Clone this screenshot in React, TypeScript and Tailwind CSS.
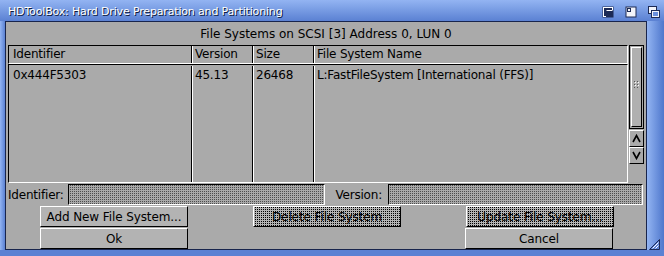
import React from 'react'

const font = { fontFamily: '"DejaVu Sans", Verdana, sans-serif' }

function Btn({ label, disabled, hidden }: { label?: string; disabled?: boolean; hidden?: boolean }) {
  if (hidden) return <div className="h-[21px] w-[147px]" />
  return (
    <div className="relative flex h-[21px] w-[148px] items-center justify-center border border-t-white border-l-white border-r-black border-b-black bg-[#b3b3b3] text-[12px] tracking-[-0.1px] text-black">
      {label}
      {disabled && (
        <div className="absolute inset-0 bg-[conic-gradient(#000_25%,transparent_0)] bg-[length:2px_2px]" />
      )}
    </div>
  )
}

function Field({ w }: { w: string }) {
  return (
    <div className={`h-[21px] ${w} border border-t-black border-l-black border-r-white border-b-white`}>
      <div className="h-full w-full bg-[conic-gradient(#4c4c4c_25%,#a9a9a9_0)] bg-[length:2px_2px]" />
    </div>
  )
}

function Row({ cells }: { cells: string[] }) {
  return (
    <div className="flex h-full text-[12px] tracking-[-0.2px] text-black">
      <div className="w-[183px] shrink-0 border-r border-black pl-[4px]">{cells[0]}</div>
      <div className="w-[61px] shrink-0 border-l border-r border-l-white border-r-black pl-[2px]">{cells[1]}</div>
      <div className="w-[61px] shrink-0 border-l border-r border-l-white border-r-black pl-[2px]">{cells[2]}</div>
      <div className="flex-1 border-l border-white pl-[2px]">{cells[3]}</div>
    </div>
  )
}

export default function App() {
  return (
    <div style={font} className="relative flex h-[256px] w-[664px] flex-col overflow-hidden bg-[#6a8fdc]">
      {/* title bar */}
      <div className="flex h-[21px] items-center bg-gradient-to-b from-[#93b4f2] to-[#5b81d3] pl-[8px] pt-[3px]">
        <span className="text-[11px] tracking-[-0.16px] text-white [text-shadow:1px_1px_0_#0d1a3c]">HDToolBox: Hard Drive Preparation and Partitioning</span>
        <div className="ml-auto mr-[4px] flex items-center gap-[11px]">
          <svg width="12" height="12" viewBox="0 0 12 12">
            <rect x="0.5" y="0.5" width="11" height="11" fill="#1c2a55" />
            <rect x="1.5" y="1.5" width="9" height="9" fill="none" stroke="#fff" />
            <rect x="5" y="5" width="5" height="5" fill="#1c2a55" />
            <rect x="4.5" y="4.5" width="6" height="6" fill="none" stroke="#1c2a55" />
            <path d="M4.5 4.5 H10.5" stroke="#fff" />
          </svg>
          <svg width="12" height="12" viewBox="0 0 12 12">
            <rect x="0.5" y="0.5" width="11" height="11" fill="#1c2a55" />
            <rect x="1.5" y="1.5" width="9" height="9" fill="#f2f4fa" />
            <rect x="2" y="2" width="4" height="4" fill="#1c2a55" />
            <rect x="3" y="3" width="2" height="2" fill="#f2f4fa" />
          </svg>
          <svg width="12" height="12" viewBox="0 0 12 12">
            <rect x="0.5" y="0.5" width="8" height="7" fill="#f2f4fa" stroke="#1c2a55" />
            <rect x="3.5" y="4.5" width="8" height="7" fill="#f2f4fa" stroke="#1c2a55" />
            <rect x="5" y="6" width="5" height="4" fill="#6a8fdc" />
          </svg>
        </div>
      </div>

      <div className="flex flex-1">
        <div className="w-[5px] bg-gradient-to-r from-[#93b4f2] to-[#5b81d3]" />
        {/* window contents */}
        <div className="flex h-[229px] w-[642px] flex-col border border-[#18254d] bg-[#aaaaaa] px-[1px]">
          <div className="flex h-[23px] items-center justify-center pt-[1px] text-[12px] text-black">
            File Systems on SCSI [3] Address 0, LUN 0
          </div>

          <div className="flex gap-[1px] pl-[1px]">
            <div className="flex w-[620px] flex-col">
              <div className="h-[19px] border border-t-black border-l-black border-r-white border-b-white leading-[17px]">
                <Row cells={['Identifier', 'Version', 'Size', 'File System Name']} />
              </div>
              <div className="h-[119px] border border-t-black border-l-black border-r-white border-b-white pt-[1px]">
                <Row cells={['0x444F5303', '45.13', '26468', 'L:FastFileSystem [International (FFS)]']} />
              </div>
            </div>
            {/* scroller */}
            <div className="flex w-[15px] flex-col">
              <div className="h-[84px] border border-black p-[1px]">
                <div className="flex h-full flex-col items-center justify-center border border-t-white border-l-white border-r-black border-b-black bg-[#b0b0b0]">
                  <svg width="5" height="7" viewBox="0 0 5 7" className="mb-[6px]">
                    <rect x="0" y="0" width="1" height="1" fill="#555" />
                    <rect x="3" y="0" width="1" height="1" fill="#555" />
                    <rect x="0" y="3" width="1" height="1" fill="#555" />
                    <rect x="3" y="3" width="1" height="1" fill="#555" />
                    <rect x="0" y="6" width="1" height="1" fill="#555" />
                    <rect x="3" y="6" width="1" height="1" fill="#555" />
                    <rect x="1" y="1" width="1" height="1" fill="#fff" />
                    <rect x="4" y="1" width="1" height="1" fill="#fff" />
                    <rect x="1" y="4" width="1" height="1" fill="#fff" />
                    <rect x="4" y="4" width="1" height="1" fill="#fff" />
                  </svg>
                </div>
              </div>
              <div className="mt-[1px] flex h-[17px] items-center justify-center border border-t-white border-l-white border-r-black border-b-black bg-[#aaaaaa]">
                <svg width="9" height="9" viewBox="0 0 9 9">
                  <path d="M1 8 L4.5 1.5 L8 8" fill="none" stroke="#000" strokeWidth="1.6" />
                </svg>
              </div>
              <div className="flex h-[17px] items-center justify-center border border-t-white border-l-white border-r-black border-b-black bg-[#aaaaaa]">
                <svg width="9" height="9" viewBox="0 0 9 9">
                  <path d="M1 1 L4.5 7.5 L8 1" fill="none" stroke="#000" strokeWidth="1.6" />
                </svg>
              </div>
            </div>
          </div>

          {/* fields */}
          <div className="mt-[1px] flex h-[21px] items-center text-[12px] tracking-[-0.2px] text-black">
            <span className="w-[61px] whitespace-nowrap pl-[1px]">Identifier:</span>
            <Field w="w-[257px]" />
            <span className="ml-[6px] w-[57px] pr-[6px] text-right">Version:</span>
            <Field w="w-[255px]" />
          </div>

          <div className="mt-[1px] flex gap-[65px] pl-[33px]">
            <Btn label="Add New File System..." />
            <Btn label="Delete File System" disabled />
            <Btn label="Update File System..." disabled />
          </div>
          <div className="mt-[1px] flex gap-[65px] pl-[33px]">
            <Btn label="Ok" />
            <Btn hidden />
            <Btn label="Cancel" />
          </div>
        </div>
        <div className="flex-1 bg-gradient-to-r from-[#93b4f2] to-[#4f77cc]" />
      </div>
      <div className="h-[6px] bg-[#5b81d3]" />

      {/* size gadget */}
      <svg width="11" height="11" viewBox="0 0 11 11" className="absolute right-[4px] bottom-[6px]">
        <path d="M10.5 0.5 L0.5 10.5 H10.5 Z" fill="#5b81d3" stroke="#1c2a55" />
        <path d="M9.5 3.5 L3.5 9.5 M9.5 6.5 L6.5 9.5" stroke="#fff" />
      </svg>
    </div>
  )
}
